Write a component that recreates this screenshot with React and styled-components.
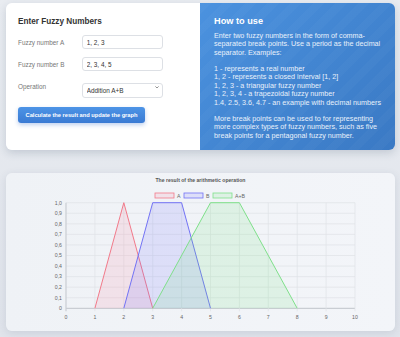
import React from "react";
import styled, { createGlobalStyle } from "styled-components";

const GlobalStyle = createGlobalStyle`
  html, body { margin: 0; padding: 0; }
  body {
    min-height: 337px;
    background: linear-gradient(180deg, #e9ecf1 0%, #e0e4eb 100%);
    font-family: "Liberation Sans", Arial, sans-serif;
  }
`;

const Page = styled.main`
  display: flex;
  flex-direction: column;
  gap: 23px;
  padding: 3px 5px 6px 6px;
`;

const TopCard = styled.div`
  display: flex;
  height: 147px;
  border-radius: 6px;
  box-shadow: 0 3px 9px rgba(40, 60, 90, 0.18);
`;

const FormPanel = styled.section`
  flex: 0 0 194px;
  box-sizing: border-box;
  padding: 13px 12px;
  background: #fff;
  border-radius: 6px 0 0 6px;
`;

const HelpPanel = styled.section`
  flex: 1;
  box-sizing: border-box;
  padding: 13px 7px 13px 14px;
  border-radius: 0 6px 6px 0;
  color: #e9f1fb;
  background:
    repeating-linear-gradient(135deg, rgba(255,255,255,0.025) 0 8px, rgba(255,255,255,0) 8px 16px),
    linear-gradient(135deg, #4b92df 0%, #3a79c4 100%);
`;

const Title = styled.h2`
  margin: 0;
  font-size: ${p => p.$size}px;
  line-height: 11px;
  font-weight: 700;
  color: ${p => (p.$light ? "#fff" : "#333")};
`;

const Fields = styled.div`
  display: grid;
  grid-template-columns: 63.7px 81px;
  row-gap: 8px;
  align-items: center;
  margin-top: 8px;
`;

const Label = styled.label`
  font-size: 6.4px;
  color: #777;
`;

const Input = styled.input`
  box-sizing: border-box;
  width: 81px;
  height: 14px;
  padding: 0 4px;
  border: 1px solid #dde0e5;
  border-radius: 3px;
  font-family: inherit;
  font-size: 6.4px;
  color: #333;
  outline: none;
`;

const SelectWrap = styled.div`
  position: relative;
  width: 81px;
  height: 15px;
`;

const Select = styled.select`
  appearance: none;
  box-sizing: border-box;
  width: 100%;
  height: 100%;
  padding: 0 4px;
  border: 1px solid #dde0e5;
  border-radius: 3px;
  background: #fff;
  font-family: inherit;
  font-size: 6.4px;
  color: #333;
  outline: none;
`;

const Chevron = styled.svg`
  position: absolute;
  right: 4px;
  top: 6.5px;
  pointer-events: none;
`;

const Button = styled.button`
  display: block;
  margin-top: 12.5px;
  width: 127px;
  height: 16.5px;
  padding: 0;
  border: none;
  border-radius: 3px;
  background: linear-gradient(180deg, #4d94e6 0%, #3a7ad3 100%);
  box-shadow: 0 2px 4px rgba(40, 100, 200, 0.3);
  color: #fff;
  font-family: inherit;
  font-size: 5.7px;
  font-weight: 700;
  cursor: pointer;
`;

const Para = styled.p`
  margin: ${p => (p.$first ? "4.5px" : "7.5px")} 0 0;
  font-size: 7.2px;
  line-height: 8.5px;
`;

const ChartCard = styled.section`
  height: 158px;
  border-radius: 6px;
  background: linear-gradient(90deg, #eff2f6 0%, #f3f5f9 100%);
  box-shadow: 0 2px 8px rgba(40, 60, 90, 0.12);
  overflow: hidden;
`;

const X0 = 66, XU = 28.9, Y0 = 308.3, YU = 105.6;
const sx = v => X0 + v * XU;
const sy = v => Y0 - v * YU;

const series = [
  { name: "A", color: "#f27a8a", fill: "rgba(255,99,132,0.12)", pts: [[1, 0], [2, 1], [3, 0]] },
  { name: "B", color: "#7373f5", fill: "rgba(110,110,255,0.15)", pts: [[2, 0], [3, 1], [4, 1], [5, 0]] },
  { name: "A+B", color: "#7fe08a", fill: "rgba(110,230,120,0.15)", pts: [[3, 0], [5, 1], [6, 1], [8, 0]] },
];

const legend = [
  { x: 155, tx: 177 },
  { x: 184, tx: 206 },
  { x: 213, tx: 235 },
];

function Chart() {
  const ticks = Array.from({ length: 11 }, (_, i) => i);
  return (
    <svg width="389" height="158" viewBox="6 173 389 158" fontFamily="Liberation Sans, Arial, sans-serif">
      <text x="200.5" y="182" textAnchor="middle" fontSize="5.1" fontWeight="700" fill="#555">
        The result of the arithmetic operation
      </text>
      {series.map((s, i) => (
        <g key={s.name}>
          <rect x={legend[i].x} y="193" width="19" height="5" fill={s.fill} stroke={s.color} strokeWidth="0.8" />
          <text x={legend[i].tx} y="197.6" fontSize="5.2" fill="#666">{s.name}</text>
        </g>
      ))}
      {ticks.map(i => (
        <line key={"h" + i} x1={X0} x2={sx(10)} y1={sy(i / 10)} y2={sy(i / 10)}
          stroke={i === 0 ? "#c9cdd3" : "#dfe2e7"} strokeWidth={i === 0 ? 1.2 : 0.7} />
      ))}
      {ticks.map(i => (
        <line key={"v" + i} x1={sx(i)} x2={sx(i)} y1={sy(1)} y2={Y0 + 3}
          stroke={i === 0 ? "#c9cdd3" : "#dfe2e7"} strokeWidth={i === 0 ? 1.2 : 0.7} />
      ))}
      {ticks.map(i => (
        <text key={"yl" + i} x="62" y={sy(i / 10) + 1.8} textAnchor="end" fontSize="5.2" fill="#666">
          {i === 0 ? "0" : (i / 10).toFixed(1).replace(".", ",")}
        </text>
      ))}
      {ticks.map(i => (
        <text key={"xl" + i} x={sx(i)} y="318.5" textAnchor="middle" fontSize="5.2" fill="#666">{i}</text>
      ))}
      {series.map(s => {
        const line = s.pts.map(([x, y]) => `${sx(x)},${sy(y)}`).join(" ");
        return (
          <g key={s.name}>
            <polygon points={line} fill={s.fill} />
            <polyline points={line} fill="none" stroke={s.color} strokeWidth="1" strokeLinejoin="round" />
          </g>
        );
      })}
    </svg>
  );
}

export default function App() {
  return (
    <>
      <GlobalStyle />
      <Page>
        <TopCard>
          <FormPanel>
            <Title $size={8.2}>Enter Fuzzy Numbers</Title>
            <Fields>
              <Label htmlFor="fa">Fuzzy number A</Label>
              <Input id="fa" defaultValue="1, 2, 3" />
              <Label htmlFor="fb">Fuzzy number B</Label>
              <Input id="fb" defaultValue="2, 3, 4, 5" />
              <Label htmlFor="op">Operation</Label>
              <SelectWrap>
                <Select id="op" defaultValue="add">
                  <option value="add">Addition A+B</option>
                  <option value="sub">Subtraction A-B</option>
                  <option value="mul">Multiplication A*B</option>
                  <option value="div">Division A/B</option>
                </Select>
                <Chevron width="4" height="2.5" viewBox="0 0 4 2.5">
                  <path d="M0.4 0.4 L2 2 L3.6 0.4" fill="none" stroke="#666" strokeWidth="0.7" />
                </Chevron>
              </SelectWrap>
            </Fields>
            <Button>Calculate the result and update the graph</Button>
          </FormPanel>
          <HelpPanel>
            <Title $size={9.2} $light>How to use</Title>
            <Para $first>
              Enter two fuzzy numbers in the form of comma-separated break points. Use a period as the decimal separator. Examples:
            </Para>
            <Para>
              1 - represents a real number<br />
              1, 2 - represents a closed interval [1, 2]<br />
              1, 2, 3 - a triangular fuzzy number<br />
              1, 2, 3, 4 - a trapezoidal fuzzy number<br />
              1.4, 2.5, 3.6, 4.7 - an example with decimal numbers
            </Para>
            <Para>
              More break points can be used to for representing more complex types of fuzzy numbers, such as five break points for a pentagonal fuzzy number.
            </Para>
          </HelpPanel>
        </TopCard>
        <ChartCard>
          <Chart />
        </ChartCard>
      </Page>
    </>
  );
}
